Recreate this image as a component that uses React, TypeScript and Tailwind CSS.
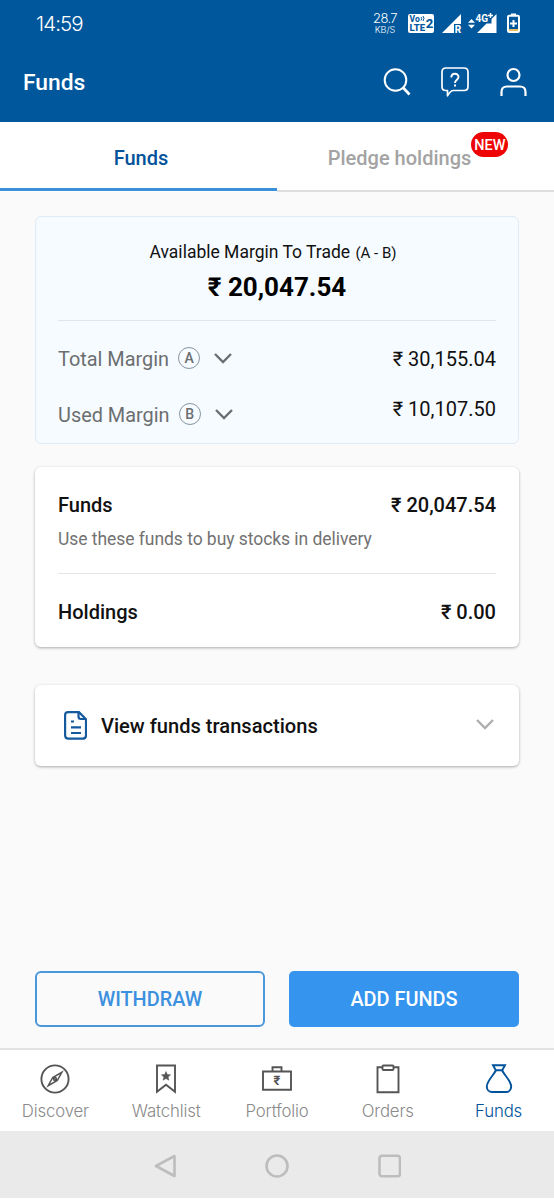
import type { ReactNode } from 'react'
import clsx from 'clsx'

function StatusBar() {
  return (
    <div className="flex h-[47px] items-center pr-[34px] pl-9 text-white">
      <span className="flex-1 pt-px font-['Inter'] text-[20.5px] leading-none font-light tracking-[-0.9px]">14:59</span>
      <div className="flex h-6 items-center">
        <div className="mr-[11px] flex w-[24px] flex-col items-center font-['Inter'] leading-none font-light whitespace-nowrap">
          <span className="text-[13px] leading-[13px] tracking-[-0.6px]">28.7</span>
          <span className="text-[9px] leading-[10px]">KB/S</span>
        </div>
        <svg className="mr-[8px] h-[19px] w-[26px]" viewBox="0 0 26 19" fontFamily="Roboto" fontWeight="800" fill="#00579c">
          <rect width="26" height="19" rx="2" fill="white" />
          <text x="1.500" y="8" fontSize="8.500">Vo</text>
          <path d="M13 3q1.500 1.500 0 3.500M15 2q2 2.500 0 5" fill="none" stroke="#00579c" strokeWidth="1" />
          <text x="1.500" y="17" fontSize="8.500" textLength="15.500" lengthAdjust="spacingAndGlyphs">LTE</text>
          <text x="17.800" y="14" fontSize="13">2</text>
        </svg>
        <svg className="mr-[6px] h-6 w-5" viewBox="0 0 20 24" fill="white">
          <path d="M0 21 19 2v10h-7v9z" />
          <text x="12.800" y="21" fontSize="10" fontWeight="800" fontFamily="Roboto">R</text>
        </svg>
        <svg className="mr-[10px] h-6 w-[29px]" viewBox="0 0 29 24" fill="white">
          <path d="M3.500 7 7 10.800H0zM3.500 16.500 7 12.700H0z" />
          <path d="M9 21 18.500 11.500h5V7L28.500 2v19z" />
          <text x="7.500" y="9.500" fontSize="10" fontWeight="700" fontFamily="Roboto">4G</text>
          <path d="M22.500 1v5M20 3.500h5" stroke="white" strokeWidth="1.500" />
        </svg>
        <svg className="h-6 w-[13px]" viewBox="0 0 13 24" fill="none">
          <path d="M4 1.500h5v2.500H4z" fill="white" />
          <rect x="1" y="3.700" width="11" height="16.300" rx="1.200" stroke="white" strokeWidth="2" />
          <path d="M2 17h9v2H2z" fill="#e8bd62" />
          <path d="M6.500 8v7M3 11.500h7" stroke="white" strokeWidth="2" />
        </svg>
      </div>
    </div>
  )
}

function Header() {
  return (
    <header className="flex h-[75px] items-center pr-[27px] pb-[5px] pl-[23px] text-white">
      <h1 className="flex-1 pt-[3px] text-[22.800px] leading-none font-medium">Funds</h1>
      <svg className="mr-[30px] h-7 w-7" viewBox="0 0 28 28" fill="none" stroke="white" strokeWidth="2">
        <circle cx="12.500" cy="12" r="10.800" />
        <path d="m20 19.500 6.500 7" strokeWidth="2.600" />
      </svg>
      <svg className="mr-[31px] h-[30px] w-7" viewBox="0 0 28 30" fill="none" stroke="white" strokeWidth="1.700" strokeLinejoin="round">
        <path d="M5 1h18q4 0 4 4v14.500q0 4-4 4H12.500q-3 0-6 5.300v-5.300H5q-4 0-4-4V5q0-4 4-4z" />
        <path d="M10.300 10.500c0-5 7.200-5 7.200-.5 0 2.700-3.500 2.800-3.500 6" strokeWidth="1.900" />
        <path d="M14 17.500v2" strokeWidth="2" />
      </svg>
      <svg className="h-[30px] w-[27px]" viewBox="0 0 27 30" fill="none" stroke="white" strokeWidth="2.200">
        <circle cx="13.500" cy="8" r="6" />
        <path d="M1.500 29v-4q0-5.500 5.500-5.500h13q5.500 0 5.500 5.500v4" />
      </svg>
    </header>
  )
}

function Tabs() {
  return (
    <div className="flex h-[70px] bg-white text-[20px] leading-none font-medium">
      <div className="mb-px flex w-[277px] items-center justify-center border-b-3 border-[#3c8fd9] pt-[5px] pl-[5px] text-[#00529b]">
        Funds
      </div>
      <div className="flex flex-1 items-center justify-center border-b-2 border-[#dedede] pt-1 pl-2 text-[#a3a3a3]">
        <span className="relative -left-5">
          Pledge holdings
          <span className="absolute -top-[16px] left-full flex h-[25px] w-[37px] items-center justify-center rounded-full bg-[#ee0404] pt-[3px] text-[14.500px] font-medium text-white">
            NEW
          </span>
        </span>
      </div>
    </div>
  )
}

function Chevron({ className }: { className?: string }) {
  return (
    <svg className={clsx('h-[11px] w-[18px]', className)} viewBox="0 0 18 11" fill="none" stroke="currentColor" strokeWidth="2.300">
      <path d="m1 1 8 8 8-8" />
    </svg>
  )
}

function MarginRow({ label, tag, amount, className }: { label: string; tag: string; amount: string; className?: string }) {
  return (
    <div className="flex items-center justify-between">
      <div className="flex items-center text-[#6b6e70]">
        <span className="relative top-px text-[19.900px] leading-6">{label}</span>
        <span className="-mt-[2px] ml-[9px] flex h-[22px] w-[22px] items-center justify-center rounded-full border border-[#86969f] text-[14px] leading-none font-medium">
          {tag}
        </span>
        <Chevron className="-mt-px ml-[14px]" />
      </div>
      <span className={clsx('text-[20px] leading-6 text-[#111]', className)}>{amount}</span>
    </div>
  )
}

function MarginCard() {
  return (
    <section className="h-[228px] rounded-[6px] border border-[#dfebf5] bg-[#f6fbff] px-[22px] pt-[23px]">
      <p className="pr-2 text-center text-[17.500px] leading-6 text-[#111]">
        Available Margin To Trade <span className="ml-px text-[15px]">(A - B)</span>
      </p>
      <p className="mt-[6px] text-center text-[26px] leading-8 font-bold text-black">₹ 20,047.54</p>
      <div className="mt-[17px] mb-[26px] h-px bg-[#dfe6eb]" />
      <MarginRow label="Total Margin" tag="A" amount="₹ 30,155.04" />
      <div className="h-8" />
      <MarginRow label="Used Margin" tag="B" amount="₹ 10,107.50" className="-mt-[12px]" />
    </section>
  )
}

function FundsCard() {
  return (
    <section className="mt-[23px] h-[180px] rounded-[6px] bg-white px-[23px] pt-[26px] text-[20px] font-medium text-[#111] shadow-[0_1px_3px_rgba(0,0,0,0.32)]">
      <div className="flex justify-between leading-6">
        <span>Funds</span>
        <span>₹ 20,047.54</span>
      </div>
      <p className="mt-[10px] text-[17.500px] leading-6 font-normal tracking-[-0.050px] text-[#727272]">
        Use these funds to buy stocks in delivery
      </p>
      <div className="mt-[22px] mb-[26px] h-px bg-[#e6e6e6]" />
      <div className="flex justify-between leading-6">
        <span>Holdings</span>
        <span>₹ 0.00</span>
      </div>
    </section>
  )
}

function TransactionsCard() {
  return (
    <section className="mt-[38px] flex h-[81px] items-center rounded-[6px] bg-white pr-[25px] pl-[29px] shadow-[0_1px_3px_rgba(0,0,0,0.32)]">
      <svg className="mr-[14px] h-[29px] w-[23px]" viewBox="0 0 23 29" fill="none" stroke="#155a9d" strokeWidth="2.200">
        <path d="M4 1.200h11l7 7v16q0 3.500-3.500 3.500H4.500q-3.400 0-3.400-3.500V4q0-2.800 2.900-2.800z" />
        <path d="M14.500 1v4.500q0 2.500 2.500 2.500h5" />
        <path d="M7 10.500h3M7 16.300h10M7 22h10" />
      </svg>
      <span className="flex-1 text-[20.100px] leading-6 font-medium text-[#111]">View funds transactions</span>
      <Chevron className="mb-[3px] text-[#adadad]" />
    </section>
  )
}

function NavItem({ label, active, children }: { label: string; active?: boolean; children: ReactNode }) {
  return (
    <div className={clsx('flex flex-1 flex-col items-center pt-[13px]', active ? 'text-[#00529b]' : 'text-[#555]')}>
      <svg className="h-8 w-8" viewBox="0 0 32 32" fill="none" stroke="currentColor" strokeWidth="1.900">
        {children}
      </svg>
      <span
        className={clsx(
          "mt-[6px] font-['Inter'] text-[16.800px] leading-5 font-light tracking-[-0.15px]",
          active ? 'text-[#00529b]' : 'text-[#8a8a8a]',
        )}
      >
        {label}
      </span>
    </div>
  )
}

function BottomNav() {
  return (
    <nav className="flex h-[83px] border-t-2 border-[#e2e2e2] bg-white">
      <NavItem label="Discover">
        <circle cx="16" cy="16" r="13.600" />
        <path d="M22.800 9.300 18.300 17.500 9.200 22.700 13.700 14.500zM13.700 14.500l4.600 3" strokeWidth="1.500" />
        <circle cx="16" cy="16" r="1.600" strokeWidth="1.200" />
      </NavItem>
      <NavItem label="Watchlist">
        <path d="M7 2.500h18v26.300l-9-7-9 7z" />
        <path d="m16 8.500 1.300 3 3.300.3-2.500 2.200.8 3.200-2.900-1.700-2.900 1.700.8-3.200-2.500-2.200 3.300-.3z" fill="currentColor" strokeWidth="0.500" />
      </NavItem>
      <NavItem label="Portfolio">
        <path d="M2 8.500h28v18.300H2zM11.500 8V4.200h9V8" />
        <text x="16" y="21.800" textAnchor="middle" fill="currentColor" stroke="none" fontFamily="Roboto" fontSize="13" fontWeight="700">
          ₹
        </text>
      </NavItem>
      <NavItem label="Orders">
        <path d="M10.500 4.200h-5v25h21v-25h-5" />
        <rect x="10.500" y="2.500" width="11" height="4.500" rx="1" />
      </NavItem>
      <NavItem label="Funds" active>
        <path d="M10 2.300h12l-2.800 5h-6.400z" />
        <path d="M12.800 7.500c-2 4.500-9 10.500-9 16 0 3 2.200 5.500 5.200 5.500h14c3 0 5.200-2.500 5.200-5.500 0-5.500-7-11.500-9-16" />
      </NavItem>
    </nav>
  )
}

function SystemBar() {
  return (
    <div className="flex h-[67px] items-center justify-center gap-[88px] bg-[#eaeaea] pt-[2px] text-[#bdbdbd]">
      <svg className="h-6 w-6" viewBox="0 0 24 24" fill="none" stroke="currentColor" strokeWidth="2.600" strokeLinejoin="round">
        <path d="M21.500 2v20L3 12z" />
      </svg>
      <svg className="h-6 w-6" viewBox="0 0 24 24" fill="none" stroke="currentColor" strokeWidth="2.600">
        <circle cx="12" cy="12" r="10.500" />
      </svg>
      <svg className="h-6 w-6" viewBox="0 0 24 24" fill="none" stroke="currentColor" strokeWidth="2.600">
        <rect x="2.500" y="1.800" width="20.500" height="20.500" rx="2.500" />
      </svg>
    </div>
  )
}

export default function App() {
  return (
    <div className="flex h-[1200px] w-[554px] flex-col overflow-hidden bg-[#fafafa] font-['Roboto',sans-serif]">
      <div className="bg-[#00579c]">
        <StatusBar />
        <Header />
      </div>
      <Tabs />
      <main className="flex flex-1 flex-col px-[35px] pt-6">
        <MarginCard />
        <FundsCard />
        <TransactionsCard />
        <div className="mt-auto mb-[21px] flex justify-between text-[19.900px] font-medium">
          <button className="h-14 w-[230px] rounded-[6px] border-2 border-[#4b97db] pt-[2px] text-[#3c90dd]">WITHDRAW</button>
          <button className="h-14 w-[230px] rounded-[5px] bg-[#3494ee] pt-[2px] text-white">ADD FUNDS</button>
        </div>
      </main>
      <BottomNav />
      <SystemBar />
      <div className="h-[2px] bg-white" />
    </div>
  )
}
